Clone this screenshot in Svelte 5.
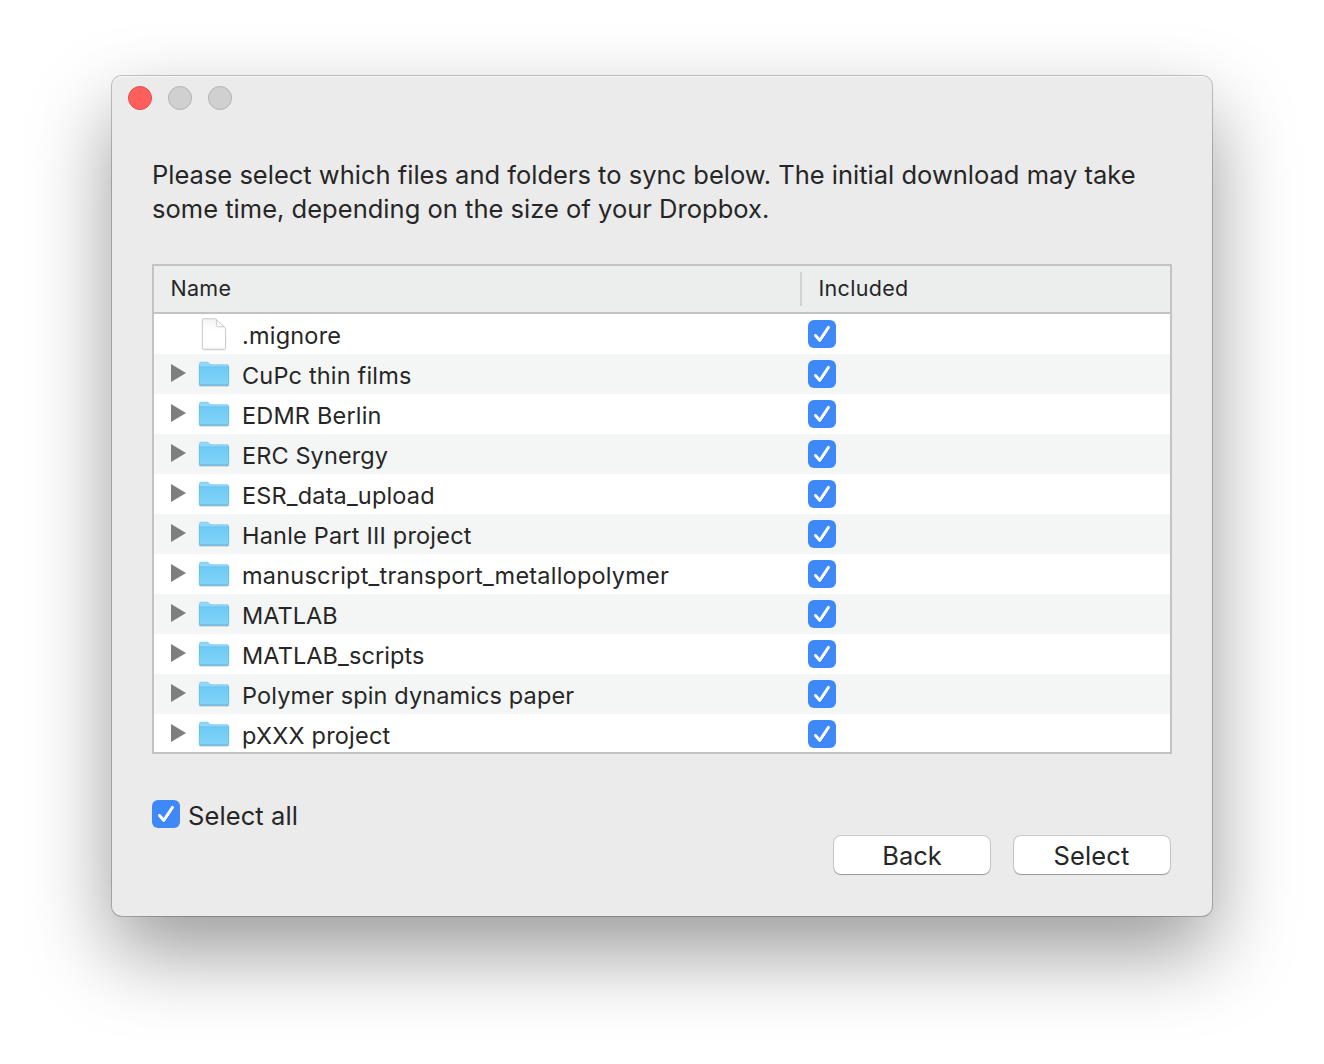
<script>
  const items = [
    { name: '.mignore', folder: false, spacing: 0.2 },
    { name: 'CuPc thin films', folder: true, spacing: 0.18 },
    { name: 'EDMR Berlin', folder: true, spacing: 0.18 },
    { name: 'ERC Synergy', folder: true, spacing: 0.1 },
    { name: 'ESR_data_upload', folder: true, spacing: 0.17 },
    { name: 'Hanle Part III project', folder: true, spacing: 0.2 },
    { name: 'manuscript_transport_metallopolymer', folder: true, spacing: 0.22 },
    { name: 'MATLAB', folder: true, spacing: 0.05 },
    { name: 'MATLAB_scripts', folder: true, spacing: 0.1 },
    { name: 'Polymer spin dynamics paper', folder: true, spacing: 0.12 },
    { name: 'pXXX project', folder: true, spacing: 0.22 },
  ];
</script>

{#snippet checkbox()}
  <svg class="check" viewBox="0 0 28 28" width="28" height="28" role="img" aria-label="checked">
    <rect width="28" height="28" rx="6" fill="#3f88f7" />
    <path d="M7.7 16.6 12 21.4 20.5 8.7" fill="none" stroke="#2f6fd6" stroke-opacity=".5" stroke-width="3" stroke-linecap="round" stroke-linejoin="round" />
    <path d="M7.5 15.5 11.8 20.4 20.5 7.4" fill="none" stroke="#fff" stroke-width="3" stroke-linecap="round" stroke-linejoin="round" />
  </svg>
{/snippet}

<main class="desktop">
  <section class="window">
    <header class="titlebar">
      <span class="light close"></span>
      <span class="light"></span>
      <span class="light"></span>
    </header>

    <p class="message">
      <span class="line first">Please select which files and folders to sync below. The initial download may take</span>
      <span class="line second">some time, depending on the size of your Dropbox.</span>
    </p>

    <div class="table">
      <div class="head">
        <div class="col-name">Name</div>
        <div class="divider"></div>
        <div class="col-included">Included</div>
      </div>
      <div class="body">
        {#each items as item}
          <div class="row">
            <div class="disclosure">
              {#if item.folder}
                <svg viewBox="0 0 15 18" width="15" height="18"><path d="M0 0 15 9 0 18Z" fill="#7d7f7f" /></svg>
              {/if}
            </div>
            <div class="icon">
              {#if item.folder}
                <svg viewBox="0 -0.5 32 28" width="32" height="28">
                  <defs>
                    <linearGradient id="front" x1="0" y1="0" x2="0" y2="1">
                      <stop offset="0" stop-color="#6dcbf6" />
                      <stop offset="1" stop-color="#83d4f8" />
                    </linearGradient>
                  </defs>
                  <path d="M1.4 25.6H30.6" stroke="#000" stroke-opacity=".14" stroke-width="1.4" />
                  <path d="M1 3Q1 1.5 2.5 1.5H9.4Q10.4 1.5 11.1 2.4L12.3 4H29.6Q31 4 31 5.4V24Q31 25 30 25H2Q1 25 1 24Z" fill="#8fd8fa" />
                  <path d="M1 6.8H31V24Q31 25 30 25H2Q1 25 1 24Z" fill="url(#front)" />
                  <path d="M1.3 6.5H30.7" stroke="#5cb8e2" stroke-width=".7" />
                  <path d="M1.6 24.6H30.4" stroke="#559fc4" stroke-width=".8" />
                  <path d="M1.3 4V24M30.7 5.4V24" stroke="#5db5de" stroke-width=".6" />
                  <path d="M2.2 1.7H9.6L12 4.2H30" fill="none" stroke="#71bfe2" stroke-width=".5" />
                </svg>
              {:else}
                <svg viewBox="0 0 32 34" width="32" height="34">
                  <defs>
                    <linearGradient id="paper" x1="0" y1="0" x2="0" y2="1">
                      <stop offset="0" stop-color="#f5f5f5" />
                      <stop offset=".4" stop-color="#fff" />
                    </linearGradient>
                  </defs>
                  <path d="M5 32.8H27" stroke="#000" stroke-opacity=".16" stroke-width="1" />
                  <path d="M5.3 1.8H16.5Q17.6 1.8 18.6 2.7L26.6 10.4Q27.6 11.4 27.6 12.6V31.2Q27.6 32.2 26.6 32.2H5.3Q4.3 32.2 4.3 31.2V2.8Q4.3 1.8 5.3 1.8Z" fill="url(#paper)" stroke="#c6c6c6" stroke-width="1" />
                  <path d="M18.4 2.6V8.6Q18.4 9.8 19.6 9.8H26.2Z" fill="#fff" stroke="#c6c6c6" stroke-width=".9" stroke-linejoin="round" />
                </svg>
              {/if}
            </div>
            <div class="name" style:letter-spacing="{item.spacing}px">{item.name}</div>
            {@render checkbox()}
          </div>
        {/each}
      </div>
    </div>

    <footer>
      <div class="select-all">
        {@render checkbox()}
        <span>Select all</span>
      </div>
      <div class="buttons">
        <button class="back">Back</button>
        <button class="select">Select</button>
      </div>
    </footer>
  </section>
</main>

<style>
  :global(body) {
    background: #fff;
  }

  .desktop {
    box-sizing: border-box;
    width: 1324px;
    height: 1064px;
    padding: 76px 112px 148px;
    overflow: hidden;
    font-family: Inter, 'Liberation Sans', sans-serif;
    color: #262626;
  }

  .window {
    box-sizing: border-box;
    width: 1100px;
    height: 840px;
    padding: 10px 40px 0;
    border-radius: 10px;
    background: #ebebeb;
    box-shadow:
      inset 0 1px 0 #f8f8f8,
      0 0 0 1px rgba(0, 0, 0, 0.22),
      0 36px 82px rgba(0, 0, 0, 0.4);
  }

  .titlebar {
    display: flex;
    gap: 16px;
    height: 24px;
    margin-left: -24px;
  }

  .light {
    box-sizing: border-box;
    width: 24px;
    height: 24px;
    border: 1px solid #b3b3b3;
    border-radius: 50%;
    background: #d0d0d0;
  }

  .close {
    border-color: #e24b48;
    background: #ff605c;
  }

  .message {
    margin: 48px 0 0;
    font-size: 25.5px;
    line-height: 34px;
    white-space: nowrap;
  }

  .line {
    display: block;
  }

  .second {
    letter-spacing: 0.02px;
  }

  .table {
    box-sizing: border-box;
    height: 490px;
    margin-top: 38px;
    border: 2px solid #c3c3c3;
    overflow: hidden;
    background: #fff;
  }

  .head {
    display: flex;
    align-items: center;
    height: 46px;
    border-bottom: 2px solid #c3c3c3;
    background: #eceeed;
    font-size: 21.5px;
    letter-spacing: 0.3px;
  }

  .col-name {
    box-sizing: border-box;
    width: 646px;
    padding: 0 0 2px 16.5px;
  }

  .divider {
    width: 2px;
    height: 34px;
    background: #d0d2d1;
  }

  .col-included {
    padding: 0 0 2px 16.5px;
  }

  .row {
    display: grid;
    grid-template-columns: 17px 27px 44px 566px 28px;
    align-items: center;
    height: 40px;
  }

  .row:nth-child(even) {
    background: #f4f6f5;
  }

  .disclosure {
    grid-column: 2;
    display: flex;
    padding-bottom: 2px;
  }

  .icon {
    display: flex;
  }

  .name {
    padding-top: 3px;
    font-size: 23.5px;
    line-height: 30px;
    white-space: nowrap;
  }

  .check {
    display: block;
  }

  .select-all {
    display: flex;
    align-items: center;
    gap: 8px;
    height: 28px;
    margin-top: 46px;
    font-size: 25.5px;
    letter-spacing: 0.1px;
  }

  .select-all span {
    padding-top: 2px;
  }

  .buttons {
    display: flex;
    justify-content: flex-end;
    gap: 24px;
    margin: 8px 2px 0 0;
  }

  button {
    width: 156px;
    height: 38px;
    padding: 2px 0 0;
    border: 0;
    border-radius: 7px;
    background: #fff;
    box-shadow:
      0 0 0 1px rgba(0, 0, 0, 0.14),
      0 1px 1px 0 rgba(0, 0, 0, 0.24);
    color: inherit;
    font: inherit;
    font-size: 25.5px;
    line-height: 36px;
  }

  .select {
    padding-right: 1px;
    letter-spacing: 0.1px;
  }
</style>
